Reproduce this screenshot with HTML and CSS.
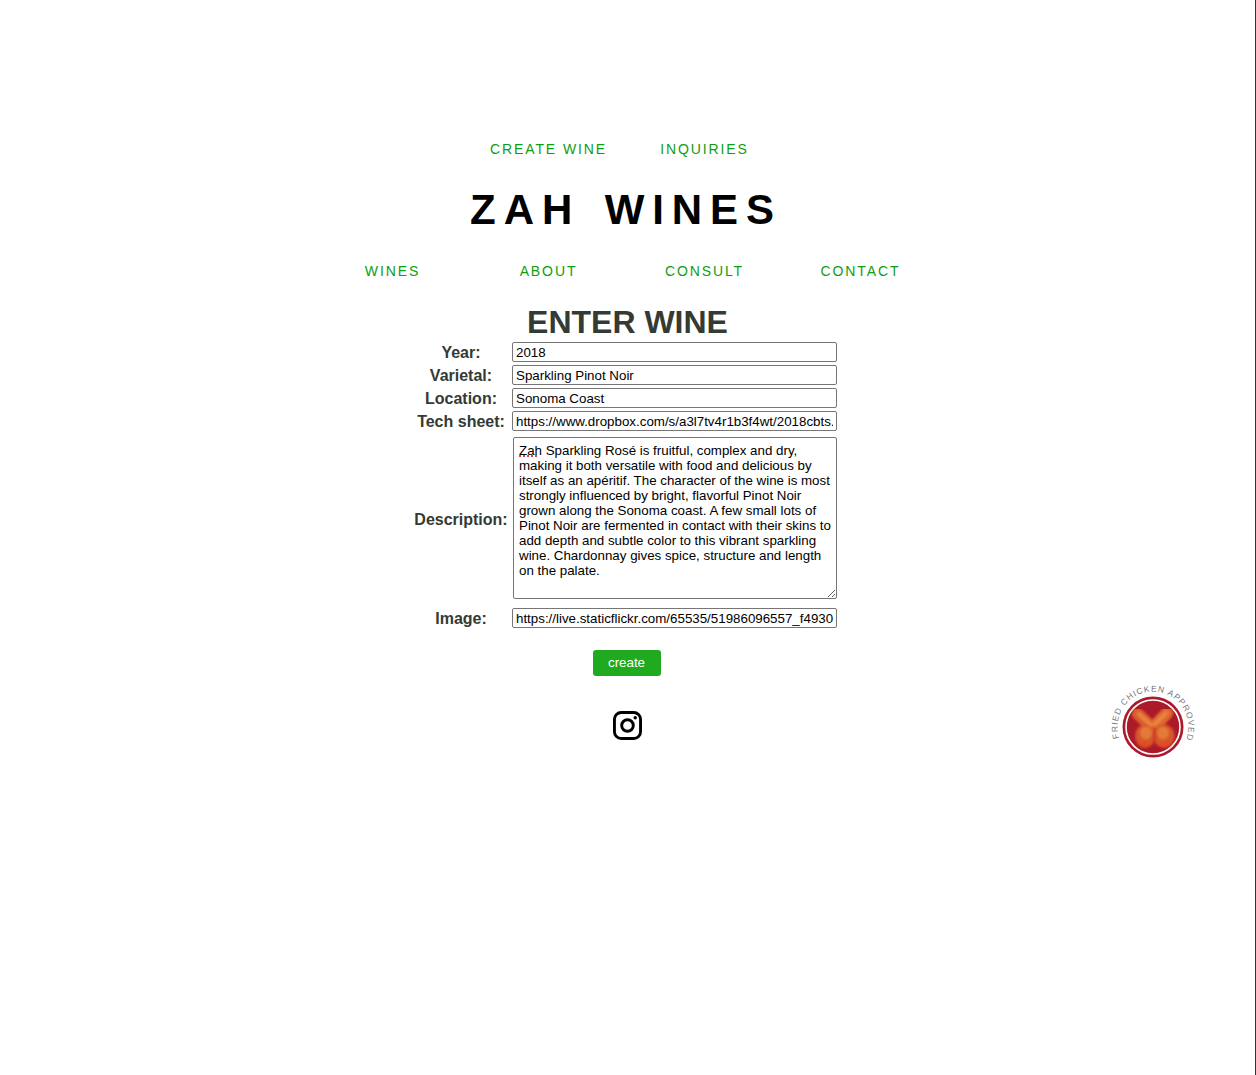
FILE: index.html
```html
<!DOCTYPE html>
<html lang="en">
<head>
    <meta charset="UTF-8">
    <title>Zah Wines</title>
    <link rel="stylesheet" href="styles.css">
</head>
<body>
    <div class="page">
        <nav class="top-nav">
            <a href="#">CREATE WINE</a>
            <a href="#">INQUIRIES</a>
        </nav>
        <h1 class="brand">ZAH WINES</h1>
        <nav class="main-nav">
            <a href="#">WINES</a>
            <a href="#">ABOUT</a>
            <a href="#">CONSULT</a>
            <a href="#">CONTACT</a>
        </nav>
        <h2 class="form-title">ENTER WINE</h2>
        <form class="wine-form" action="#" method="post">
            <label for="year">Year:</label>
            <input type="text" id="year" value="2018">
            <label for="varietal">Varietal:</label>
            <input type="text" id="varietal" value="Sparkling Pinot Noir">
            <label for="location">Location:</label>
            <input type="text" id="location" value="Sonoma Coast">
            <label for="tech">Tech sheet:</label>
            <input type="text" id="tech" value="https://www.dropbox.com/s/a3l7tv4r1b3f4wt/2018cbts.pdf?dl=0">
            <label class="desc-label" for="description">Description:</label>
            <div class="text-wrap">
                <textarea id="description" spellcheck="false">Zah Sparkling Rosé is fruitful, complex and dry, making it both versatile with food and delicious by itself as an apéritif. The character of the wine is most strongly influenced by bright, flavorful Pinot Noir grown along the Sonoma coast. A few small lots of Pinot Noir are fermented in contact with their skins to add depth and subtle color to this vibrant sparkling wine. Chardonnay gives spice, structure and length on the palate.</textarea>
                <span class="spell-mark"></span>
            </div>
            <label for="image">Image:</label>
            <input type="text" id="image" value="https://live.staticflickr.com/65535/51986096557_f4930c1e2a_b.jpg">
            <button type="button" class="create-btn">create</button>
        </form>
        <a class="insta" href="#" aria-label="Instagram">
            <svg width="29" height="29" viewBox="0 0 30 30" fill="none" stroke="#000">
                <rect x="1.5" y="1.5" width="27" height="27" rx="7" stroke-width="3"/>
                <circle cx="15" cy="15" r="6" stroke-width="3"/>
                <circle cx="23" cy="7" r="1.8" fill="#000" stroke="none"/>
            </svg>
        </a>
    </div>
    <svg class="badge" width="90" height="90" viewBox="0 0 90 90">
        <defs>
            <path id="badge-arc" d="M10.2 61 A35.5 35.5 0 1 1 71 73"/>
            <filter id="soft"><feGaussianBlur stdDeviation="0.9"/></filter>
        </defs>
        <text class="badge-text"><textPath href="#badge-arc">FRIED CHICKEN APPROVED</textPath></text>
        <circle cx="44" cy="50" r="30.5" fill="#ab1a2b"/>
        <circle cx="44" cy="50" r="27" fill="none" stroke="#fff" stroke-width="1.6"/>
        <g filter="url(#soft)">
            <g stroke-linecap="round" fill="none">
                <path d="M29 37 L48 55" stroke="#dc5f2c" stroke-width="12"/>
                <path d="M58 36 L40 55" stroke="#e0682e" stroke-width="12"/>
                <path d="M30 37 L42 48" stroke="#e8843f" stroke-width="4"/>
                <path d="M57 36 L46 47" stroke="#e8843f" stroke-width="4"/>
            </g>
            <ellipse cx="36" cy="59" rx="10" ry="11.5" fill="#d8552a"/>
            <ellipse cx="55" cy="59" rx="10.5" ry="11.5" fill="#d8552a"/>
            <ellipse cx="37" cy="56" rx="6" ry="6.5" fill="#e27a38"/>
            <ellipse cx="54" cy="56" rx="6" ry="6.5" fill="#e27a38"/>
            <path d="M45.5 50 L45.5 68" stroke="#b52c22" stroke-width="1.4"/>
            <ellipse cx="35" cy="67" rx="4" ry="2" fill="#e8481f"/>
            <ellipse cx="56" cy="67" rx="4" ry="2" fill="#e8481f"/>
        </g>
    </svg>
</body>
</html>
```

FILE: styles.css
```css
html, body {
    margin: 0;
    padding: 0;
    background-color: #fff;
}

body {
    font-family: "Liberation Sans", Arial, sans-serif;
    height: 1075px;
    border-right: 1px solid #333;
    box-sizing: border-box;
    position: relative;
    overflow: hidden;
}

.page {
    display: flex;
    flex-direction: column;
    align-items: center;
    padding-top: 141px;
}

.top-nav, .main-nav {
    display: grid;
    grid-auto-flow: column;
    grid-auto-columns: 156px;
    justify-items: center;
    margin-right: 2px;
    font-size: 14px;
    line-height: 16px;
    letter-spacing: 1.9px;
}

.top-nav a, .main-nav a {
    color: #0f9d12;
    text-decoration: none;
}

.brand {
    margin: 29px 3px 0 0;
    font-size: 42px;
    line-height: 48px;
    font-weight: 700;
    letter-spacing: 7.9px;
    word-spacing: 5px;
    color: #000;
}

.main-nav {
    margin-top: 29px;
}

.form-title {
    margin: 25px 0 1px;
    font-size: 32px;
    line-height: 37px;
    font-weight: 700;
    color: #343a34;
}

.wine-form {
    display: grid;
    grid-template-columns: 94px 325px;
    column-gap: 4px;
    row-gap: 3px;
    align-items: center;
    margin-left: -4px;
}

.wine-form label {
    padding-top: 2px;
    text-align: center;
    font-size: 16px;
    font-weight: 700;
    color: #343a34;
    white-space: nowrap;
}

.wine-form .desc-label {
    padding-top: 0;
}

.wine-form input {
    box-sizing: border-box;
    width: 325px;
    height: 20px;
    padding: 0 3px;
    font-family: inherit;
    font-size: 13.33px;
    color: #000;
    background: #fff;
    border: 1px solid #767676;
    border-radius: 2px;
    outline: none;
}

.text-wrap {
    position: relative;
    height: 171px;
    margin-left: 1px;
    padding-top: 3px;
    box-sizing: border-box;
}

.text-wrap textarea {
    display: block;
    box-sizing: border-box;
    width: 324px;
    height: 162px;
    padding: 5px;
    font-family: inherit;
    font-size: 13.33px;
    line-height: 15px;
    color: #000;
    border: 1px solid #767676;
    border-radius: 2px;
    outline: none;
}

.spell-mark {
    position: absolute;
    left: 6px;
    top: 21px;
    width: 20px;
    height: 2px;
    background-image: repeating-linear-gradient(90deg, #e0404a 0 2px, transparent 2px 4px);
}

.create-btn {
    grid-column: 1 / 3;
    justify-self: center;
    width: 68px;
    height: 26px;
    margin-top: 19px;
    margin-left: 2px;
    padding: 0 0 2px;
    font-family: inherit;
    font-size: 13.33px;
    color: #fff;
    background-color: #20aa20;
    border: none;
    border-radius: 3px;
}

.insta {
    display: block;
    width: 29px;
    height: 29px;
    margin-top: 35px;
}

.badge {
    position: absolute;
    left: 1109px;
    top: 677px;
}

.badge-text {
    font-size: 8.4px;
    letter-spacing: 1px;
    fill: #777;
}
```
